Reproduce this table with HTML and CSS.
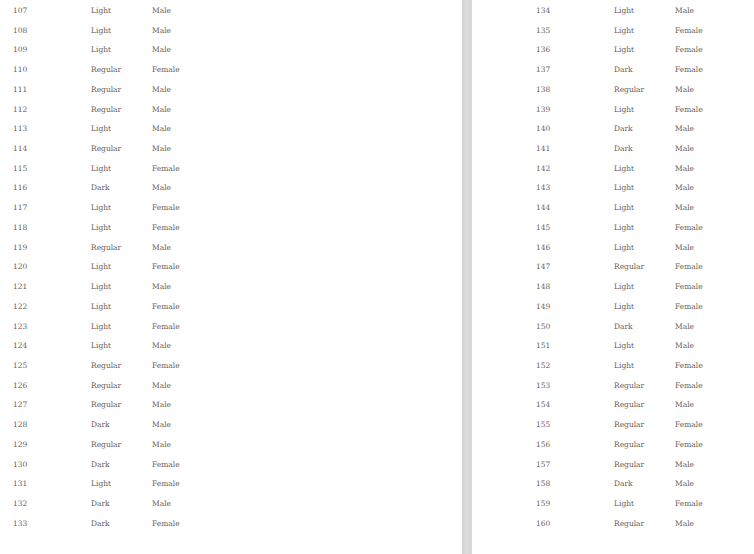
FILE: index.html
```html
<!DOCTYPE html>
<html>
<head>
<meta charset="utf-8">
<link rel="stylesheet" href="styles.css">
</head>
<body>
<div class="spread">
  <div class="page page-left">
    <div class="table">
      <div class="row"><span class="c-id">107</span><span class="c-type">Light</span><span class="c-sex">Male</span></div>
      <div class="row"><span class="c-id">108</span><span class="c-type">Light</span><span class="c-sex">Male</span></div>
      <div class="row"><span class="c-id">109</span><span class="c-type">Light</span><span class="c-sex">Male</span></div>
      <div class="row"><span class="c-id">110</span><span class="c-type">Regular</span><span class="c-sex">Female</span></div>
      <div class="row"><span class="c-id">111</span><span class="c-type">Regular</span><span class="c-sex">Male</span></div>
      <div class="row"><span class="c-id">112</span><span class="c-type">Regular</span><span class="c-sex">Male</span></div>
      <div class="row"><span class="c-id">113</span><span class="c-type">Light</span><span class="c-sex">Male</span></div>
      <div class="row"><span class="c-id">114</span><span class="c-type">Regular</span><span class="c-sex">Male</span></div>
      <div class="row"><span class="c-id">115</span><span class="c-type">Light</span><span class="c-sex">Female</span></div>
      <div class="row"><span class="c-id">116</span><span class="c-type">Dark</span><span class="c-sex">Male</span></div>
      <div class="row"><span class="c-id">117</span><span class="c-type">Light</span><span class="c-sex">Female</span></div>
      <div class="row"><span class="c-id">118</span><span class="c-type">Light</span><span class="c-sex">Female</span></div>
      <div class="row"><span class="c-id">119</span><span class="c-type">Regular</span><span class="c-sex">Male</span></div>
      <div class="row"><span class="c-id">120</span><span class="c-type">Light</span><span class="c-sex">Female</span></div>
      <div class="row"><span class="c-id">121</span><span class="c-type">Light</span><span class="c-sex">Male</span></div>
      <div class="row"><span class="c-id">122</span><span class="c-type">Light</span><span class="c-sex">Female</span></div>
      <div class="row"><span class="c-id">123</span><span class="c-type">Light</span><span class="c-sex">Female</span></div>
      <div class="row"><span class="c-id">124</span><span class="c-type">Light</span><span class="c-sex">Male</span></div>
      <div class="row"><span class="c-id">125</span><span class="c-type">Regular</span><span class="c-sex">Female</span></div>
      <div class="row"><span class="c-id">126</span><span class="c-type">Regular</span><span class="c-sex">Male</span></div>
      <div class="row"><span class="c-id">127</span><span class="c-type">Regular</span><span class="c-sex">Male</span></div>
      <div class="row"><span class="c-id">128</span><span class="c-type">Dark</span><span class="c-sex">Male</span></div>
      <div class="row"><span class="c-id">129</span><span class="c-type">Regular</span><span class="c-sex">Male</span></div>
      <div class="row"><span class="c-id">130</span><span class="c-type">Dark</span><span class="c-sex">Female</span></div>
      <div class="row"><span class="c-id">131</span><span class="c-type">Light</span><span class="c-sex">Female</span></div>
      <div class="row"><span class="c-id">132</span><span class="c-type">Dark</span><span class="c-sex">Male</span></div>
      <div class="row"><span class="c-id">133</span><span class="c-type">Dark</span><span class="c-sex">Female</span></div>
    </div>
  </div>
  <div class="gutter"></div>
  <div class="page page-right">
    <div class="table">
      <div class="row"><span class="c-id">134</span><span class="c-type">Light</span><span class="c-sex">Male</span></div>
      <div class="row"><span class="c-id">135</span><span class="c-type">Light</span><span class="c-sex">Female</span></div>
      <div class="row"><span class="c-id">136</span><span class="c-type">Light</span><span class="c-sex">Female</span></div>
      <div class="row"><span class="c-id">137</span><span class="c-type">Dark</span><span class="c-sex">Female</span></div>
      <div class="row"><span class="c-id">138</span><span class="c-type">Regular</span><span class="c-sex">Male</span></div>
      <div class="row"><span class="c-id">139</span><span class="c-type">Light</span><span class="c-sex">Female</span></div>
      <div class="row"><span class="c-id">140</span><span class="c-type">Dark</span><span class="c-sex">Male</span></div>
      <div class="row"><span class="c-id">141</span><span class="c-type">Dark</span><span class="c-sex">Male</span></div>
      <div class="row"><span class="c-id">142</span><span class="c-type">Light</span><span class="c-sex">Male</span></div>
      <div class="row"><span class="c-id">143</span><span class="c-type">Light</span><span class="c-sex">Male</span></div>
      <div class="row"><span class="c-id">144</span><span class="c-type">Light</span><span class="c-sex">Male</span></div>
      <div class="row"><span class="c-id">145</span><span class="c-type">Light</span><span class="c-sex">Female</span></div>
      <div class="row"><span class="c-id">146</span><span class="c-type">Light</span><span class="c-sex">Male</span></div>
      <div class="row"><span class="c-id">147</span><span class="c-type">Regular</span><span class="c-sex">Female</span></div>
      <div class="row"><span class="c-id">148</span><span class="c-type">Light</span><span class="c-sex">Female</span></div>
      <div class="row"><span class="c-id">149</span><span class="c-type">Light</span><span class="c-sex">Female</span></div>
      <div class="row"><span class="c-id">150</span><span class="c-type">Dark</span><span class="c-sex">Male</span></div>
      <div class="row"><span class="c-id">151</span><span class="c-type">Light</span><span class="c-sex">Male</span></div>
      <div class="row"><span class="c-id">152</span><span class="c-type">Light</span><span class="c-sex">Female</span></div>
      <div class="row"><span class="c-id">153</span><span class="c-type">Regular</span><span class="c-sex">Female</span></div>
      <div class="row"><span class="c-id">154</span><span class="c-type">Regular</span><span class="c-sex">Male</span></div>
      <div class="row"><span class="c-id">155</span><span class="c-type">Regular</span><span class="c-sex">Female</span></div>
      <div class="row"><span class="c-id">156</span><span class="c-type">Regular</span><span class="c-sex">Female</span></div>
      <div class="row"><span class="c-id">157</span><span class="c-type">Regular</span><span class="c-sex">Male</span></div>
      <div class="row"><span class="c-id">158</span><span class="c-type">Dark</span><span class="c-sex">Male</span></div>
      <div class="row"><span class="c-id">159</span><span class="c-type">Light</span><span class="c-sex">Female</span></div>
      <div class="row"><span class="c-id">160</span><span class="c-type">Regular</span><span class="c-sex">Male</span></div>
    </div>
  </div>
</div>
</body>
</html>
```
FILE: styles.css
```css
html, body {
  margin: 0;
  padding: 0;
  background: #ffffff;
}
body {
  width: 754px;
  height: 554px;
  overflow: hidden;
  font-family: "DejaVu Serif", "Liberation Serif", serif;
  font-size: 7.5px;
  color: #6c6058;
}
.spread {
  display: flex;
  height: 554px;
}
.page {
  background: #ffffff;
  height: 100%;
  box-sizing: border-box;
  padding-top: 1px;
}
.page-left {
  width: 462px;
  padding-left: 13px;
}
.page-right {
  flex: 1;
  padding-left: 64px;
}
.gutter {
  width: 10px;
  background: linear-gradient(to right, #d2d2d2, #dcdcdc 40%, #d6d6d6);
}
.table {
  display: flex;
  flex-direction: column;
}
.row {
  display: grid;
  grid-template-columns: 78px 61px auto;
  height: 19.73px;
  line-height: 19.73px;
}
```
